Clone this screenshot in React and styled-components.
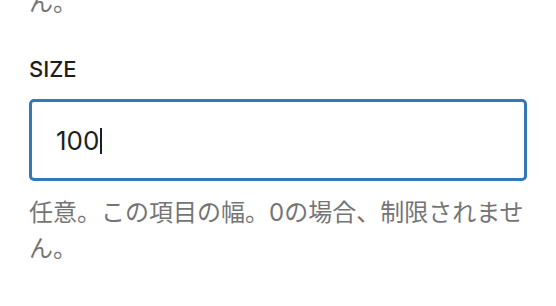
import React, { useLayoutEffect, useRef, useState } from 'react';
import styled, { createGlobalStyle } from 'styled-components';

const GlobalStyle = createGlobalStyle`
  html, body {
    margin: 0;
    padding: 0;
    background: #fff;
  }
  body {
    font-family: Inter, "Noto Sans CJK JP", sans-serif;
    overflow: hidden;
  }
`;

const Panel = styled.div`
  width: 498px;
  margin-top: -51px;
  padding-left: 29px;
`;

const Field = styled.div`
  margin-top: 33px;
`;

const Label = styled.label`
  display: block;
  margin: 0 0 14px;
  color: #1e1e1e;
  font-family: Inter, sans-serif;
  font-size: 22px;
  font-weight: 500;
  line-height: 31px;
  text-transform: uppercase;
`;

const InputWrap = styled.div`
  position: relative;
`;

const Input = styled.input`
  box-sizing: border-box;
  display: block;
  width: 100%;
  height: 82px;
  margin: 0;
  padding: 0 24px;
  border: 3px solid #3379b7;
  border-radius: 5px;
  outline: none;
  background: #fff;
  color: #1e1e1e;
  caret-color: transparent;
  font-family: Inter, sans-serif;
  font-size: 26px;
`;

// drawn caret, since the headless page never paints a focused caret
const Caret = styled.span`
  position: absolute;
  top: 29px;
  width: 2px;
  height: 26px;
  background: #1e1e1e;
  pointer-events: none;
`;

const Help = styled.p`
  margin: ${p => (p.$flush ? '0' : '14px 0 0')};
  color: #757575;
  font-family: Inter, "Noto Sans CJK JP", sans-serif;
  font-size: 24px;
  line-height: 36px;
`;

const helpText = '任意。この項目の幅。0の場合、制限されません。';

export default function App() {
  const [size, setSize] = useState('100');
  const [caretX, setCaretX] = useState(70);
  const inputRef = useRef(null);

  useLayoutEffect(() => {
    const ctx = document.createElement('canvas').getContext('2d');
    ctx.font = '26px Inter';
    setCaretX(27 + Math.round(ctx.measureText(size).width) + 1);
  }, [size]);

  return (
    <>
      <GlobalStyle />
      <Panel>
        <Help $flush>{helpText}</Help>
        <Field>
          <Label htmlFor="size">Size</Label>
          <InputWrap>
            <Input
              id="size"
              ref={inputRef}
              type="text"
              value={size}
              onChange={e => setSize(e.target.value)}
            />
            <Caret style={{ left: caretX }} />
          </InputWrap>
          <Help>{helpText}</Help>
        </Field>
      </Panel>
    </>
  );
}
